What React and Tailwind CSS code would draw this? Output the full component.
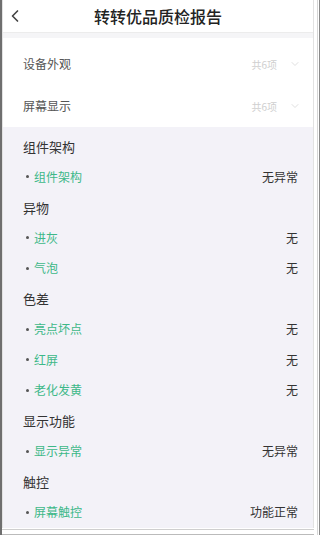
import { ChevronLeft, ChevronDown } from 'lucide-react'

const sections = [
	{ title: '组件架构', items: [['组件架构', '无异常']] },
	{ title: '异物', items: [['进灰', '无'], ['气泡', '无']] },
	{ title: '色差', items: [['亮点坏点', '无'], ['红屏', '无'], ['老化发黄', '无']] },
	{ title: '显示功能', items: [['显示异常', '无异常']] },
	{ title: '触控', items: [['屏幕触控', '功能正常']] }
]

const App = () => {
	return (
		<div
			className="flex h-[535px] w-[320px] overflow-hidden bg-white"
			style={{ fontFamily: '"Noto Sans CJK SC", "Noto Sans", sans-serif' }}
		>
			<div className="w-[2px] bg-[#6f6f6f]" />
			<div className="flex flex-1 flex-col">
				<div className="flex flex-1 flex-col border-l border-r border-[#e2e2e2]">
					{/* header */}
					<div className="relative flex h-[33px] items-center justify-center border-b border-[#ececec] bg-white">
						<ChevronLeft className="absolute left-[2px] top-[6px] h-5 w-5 text-[#444]" strokeWidth={2} />
						<p className="text-[16px] font-medium leading-none text-[#222]">转转优品质检报告</p>
					</div>
					<div className="h-[5px] bg-[#f5f5f7]" />
					{/* summary card */}
					<div className="ml-[3px] flex flex-col bg-white pl-[17px] pr-[12px] pt-[5px]">
						{['设备外观', '屏幕显示'].map((name) => (
							<div key={name} className="flex h-[42px] items-center justify-between">
								<p className="text-[12px] text-[#555]">{name}</p>
								<div className="flex items-center gap-[12px]">
									<span className="text-[10px] text-[#cfcfcf]">共6项</span>
									<ChevronDown className="h-3 w-3 text-[#e0e0e0]" />
								</div>
							</div>
						))}
					</div>
					{/* details */}
					<div className="flex flex-1 flex-col bg-[#f3f2f8] pl-[20px] pr-[15px] pt-[4px]">
						{sections.map((s) => (
							<div key={s.title} className="flex flex-col">
								<div className="flex h-[30.5px] items-center">
									<p className="text-[13px] text-[#333]">{s.title}</p>
								</div>
								{s.items.map(([k, v]) => (
									<div key={k} className="flex h-[30.5px] items-center justify-between">
										<div className="flex items-center gap-[5px] pl-[3px]">
											<span className="h-[3px] w-[3px] rounded-full bg-[#555]" />
											<span className="text-[12px] text-[#3db888]">{k}</span>
										</div>
										<span className="text-[12px] text-[#333]">{v}</span>
									</div>
								))}
							</div>
						))}
					</div>
				</div>
				<div className="h-[2px] bg-white" />
				<div className="h-[1px] bg-[#cfcfcf]" />
				<div className="h-[4px] bg-white" />
				<div className="h-[1px] bg-[#bbb]" />
			</div>
			<div className="flex w-[6px]">
				<div className="w-[3px] bg-white" />
				<div className="w-[1px] bg-[#d6d6d6]" />
				<div className="w-[1px] bg-white" />
				<div className="w-[1px] bg-[#8a8a8a]" />
			</div>
		</div>
	)
}

export default App
